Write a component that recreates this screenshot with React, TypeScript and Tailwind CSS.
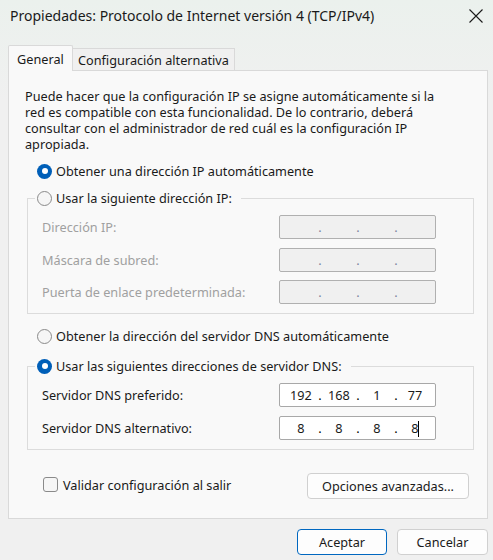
import type React from "react"

function Radio({ checked }: { checked?: boolean }) {
  if (checked) {
    return (
      <span className="flex h-[15px] w-[15px] shrink-0 items-center justify-center rounded-full bg-[#005fb8]">
        <span className="h-[6px] w-[6px] rounded-full bg-white" />
      </span>
    )
  }
  return <span className="h-[15px] w-[15px] shrink-0 rounded-full border border-[#8a8a8a] bg-[#f6f6f6]" />
}

function RadioRow({ checked, children }: { checked?: boolean; children: React.ReactNode }) {
  return (
    <div className="flex h-[20px] items-center">
      <Radio checked={checked} />
      <span className="ml-[4px] whitespace-nowrap">{children}</span>
    </div>
  )
}

function IpBox({ values, disabled, caret }: { values?: string[]; disabled?: boolean; caret?: boolean }) {
  const octets = values ?? ["", "", "", ""]
  return (
    <div
      className={`flex h-[24px] w-[157px] items-center rounded-[2px] border pl-[6px] ${
        disabled ? "border-[#b0b0b0] bg-[#f0f0f0]" : "border-[#a8a8a8] bg-white"
      }`}
    >
      {octets.map((o, i) => (
        <div key={i} className="flex items-center">
          <span className="relative w-[30px] text-center">
            {o}
            {caret && i === 3 && (
              <span className="absolute top-[1px] right-[11px] h-[16px] w-px bg-black" />
            )}
          </span>
          {i < 3 && (
            <span className={`w-[8px] text-center ${disabled ? "text-[#7e84a0]" : "text-black"}`}>.</span>
          )}
        </div>
      ))}
    </div>
  )
}

function FieldRow({ label, disabled, children }: { label: string; disabled?: boolean; children: React.ReactNode }) {
  return (
    <div className="flex items-center pl-[14px]">
      <span className={`w-[237px] whitespace-nowrap ${disabled ? "text-[#a0a0a0]" : ""}`}>{label}</span>
      {children}
    </div>
  )
}

function Group({ legend, checked, children }: { legend: string; checked?: boolean; children: React.ReactNode }) {
  return (
    <div className="ml-[18px] w-[447px] border border-[#dcdcdc] pb-[9px]">
      <div className="-mt-[11px] ml-[7px] w-fit bg-[#f9f9f9] pr-[9px] pl-[2px]">
        <RadioRow checked={checked}>{legend}</RadioRow>
      </div>
      {children}
    </div>
  )
}

export default function App() {
  return (
    <div className="flex h-[560px] w-[493px] flex-col overflow-hidden bg-linear-to-b from-[#ebf1ed] to-[#f0f0f0] to-[18%] font-['Noto_Sans',Arial,sans-serif] text-[12.7px] leading-[16px] text-[#1a1a1a]">
      {/* Title bar */}
      <div className="flex h-[32px] shrink-0 items-center pr-[10px] pl-[10px]">
        <span className="text-[14px] whitespace-nowrap">Propiedades: Protocolo de Internet versión 4 (TCP/IPv4)</span>
        <svg className="ml-auto" width="14" height="14" viewBox="0 0 14 14">
          <path d="M0.5 0.5 L13.5 13.5 M13.5 0.5 L0.5 13.5" stroke="#1a1a1a" strokeWidth="1.1" fill="none" />
        </svg>
      </div>

      {/* Tabs */}
      <div className="mt-[13px] ml-[8px] flex h-[26px] items-end">
        <div className="relative z-10 flex h-[26px] w-[65px] items-center justify-center rounded-t-[2px] border-t border-r border-l border-[#d9d9d9] bg-[#f9f9f9]">
          General
        </div>
        <div className="flex h-[23px] w-[162px] items-center justify-center border-t border-r border-[#d9d9d9] bg-[#f0f0f0]">
          Configuración alternativa
        </div>
      </div>

      {/* Panel */}
      <div className="-mt-px ml-[8px] flex h-[449px] w-[480px] flex-col border border-[#d9d9d9] bg-[#f9f9f9]">
        <p className="mt-[17px] ml-[16px] leading-[16px] whitespace-nowrap">
          Puede hacer que la configuración IP se asigne automáticamente si la
          <br />
          red es compatible con esta funcionalidad. De lo contrario, deberá
          <br />
          consultar con el administrador de red cuál es la configuración IP
          <br />
          apropiada.
        </p>

        <div className="mt-[9px] ml-[28px]">
          <RadioRow checked>Obtener una dirección IP automáticamente</RadioRow>
        </div>

        <div className="mt-[17px]">
          <Group legend="Usar la siguiente dirección IP:">
            <div className="mt-[7px]">
              <FieldRow label="Dirección IP:" disabled>
                <IpBox disabled />
              </FieldRow>
            </div>
            <div className="mt-[9px]">
              <FieldRow label="Máscara de subred:" disabled>
                <IpBox disabled />
              </FieldRow>
            </div>
            <div className="mt-[8px]">
              <FieldRow label="Puerta de enlace predeterminada:" disabled>
                <IpBox disabled />
              </FieldRow>
            </div>
          </Group>
        </div>

        <div className="mt-[12px] ml-[28px]">
          <RadioRow>Obtener la dirección del servidor DNS automáticamente</RadioRow>
        </div>

        <div className="mt-[20px]">
          <Group legend="Usar las siguientes direcciones de servidor DNS:" checked>
            <div className="mt-[7px]">
              <FieldRow label="Servidor DNS preferido:">
                <IpBox values={["192", "168", "1", "77"]} />
              </FieldRow>
            </div>
            <div className="mt-[9px]">
              <FieldRow label="Servidor DNS alternativo:">
                <IpBox values={["8", "8", "8", "8"]} caret />
              </FieldRow>
            </div>
          </Group>
        </div>

        <div className="mt-[23px] flex h-[26px] items-center pr-[18px] pl-[34px]">
          <div className="mb-[3px] flex items-center">
            <span className="h-[15px] w-[15px] rounded-[3px] border border-[#8a8a8a] bg-[#f6f6f6]" />
            <span className="ml-[5px] whitespace-nowrap">Validar configuración al salir</span>
          </div>
          <button className="ml-auto h-[26px] w-[162px] rounded-[4px] border border-[#d0d0d0] bg-[#fdfdfd]">
            Opciones avanzadas...
          </button>
        </div>
      </div>

      {/* Dialog buttons */}
      <div className="mt-[10px] flex justify-end gap-[10px] pr-[5px]">
        <button className="h-[26px] w-[90px] rounded-[4px] border border-[#0067c0] bg-[#fdfdfd]">Aceptar</button>
        <button className="h-[26px] w-[91px] rounded-[4px] border border-[#d0d0d0] bg-[#fdfdfd]">Cancelar</button>
      </div>
    </div>
  )
}
